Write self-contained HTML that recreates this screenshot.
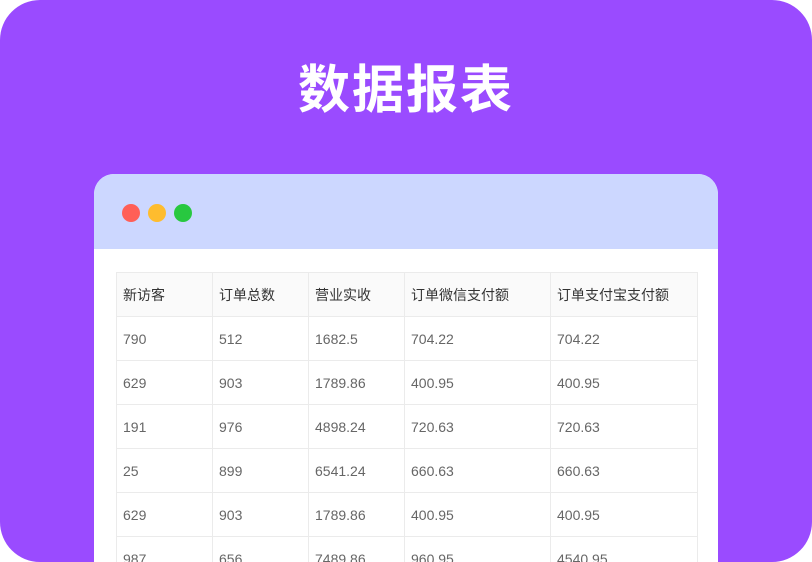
<!DOCTYPE html>
<html><head><meta charset="utf-8"><style>
*{margin:0;padding:0;box-sizing:border-box}
html,body{width:812px;height:562px;overflow:hidden;background:#fff;position:relative}
.bg{position:absolute;left:0;top:0;width:812px;height:562px;background:#9a4bff;border-radius:40px}
h1{position:absolute;left:0;width:812px;top:59px;text-align:center;color:#fff;font:bold 52px/64px "Liberation Sans","Noto Sans CJK SC",sans-serif;letter-spacing:2px}
.card{position:absolute;left:94px;top:174px;width:624px;height:388px;background:#fff;border-radius:20px 20px 0 0;overflow:hidden}
.head{height:75px;background:#ccd7ff;position:relative}
.dot{position:absolute;top:30px;width:18px;height:18px;border-radius:50%}
table{position:absolute;left:22px;top:98px;border-collapse:collapse;font:14px "Liberation Sans","Noto Sans CJK SC",sans-serif;color:#666}
td,th{border:1px solid #ebebeb;height:44px;padding:0 0 0 6px;text-align:left;vertical-align:middle}
th{background:#fafafa;color:#333;font-weight:normal}
</style></head><body>
<div class="bg"></div>
<h1>数据报表</h1>
<div class="card">
<div class="head">
<div class="dot" style="left:28px;background:#ff5f57"></div>
<div class="dot" style="left:54px;background:#febc2e"></div>
<div class="dot" style="left:80px;background:#28c840"></div>
</div>
<table>
<colgroup><col style="width:96px"><col style="width:96px"><col style="width:96px"><col style="width:146px"><col style="width:147px"></colgroup>
<tr><th>新访客</th><th>订单总数</th><th>营业实收</th><th>订单微信支付额</th><th>订单支付宝支付额</th></tr>
<tr><td>790</td><td>512</td><td>1682.5</td><td>704.22</td><td>704.22</td></tr>
<tr><td>629</td><td>903</td><td>1789.86</td><td>400.95</td><td>400.95</td></tr>
<tr><td>191</td><td>976</td><td>4898.24</td><td>720.63</td><td>720.63</td></tr>
<tr><td>25</td><td>899</td><td>6541.24</td><td>660.63</td><td>660.63</td></tr>
<tr><td>629</td><td>903</td><td>1789.86</td><td>400.95</td><td>400.95</td></tr>
<tr><td>987</td><td>656</td><td>7489.86</td><td>960.95</td><td>4540.95</td></tr>
</table>
</div>
</body></html>
